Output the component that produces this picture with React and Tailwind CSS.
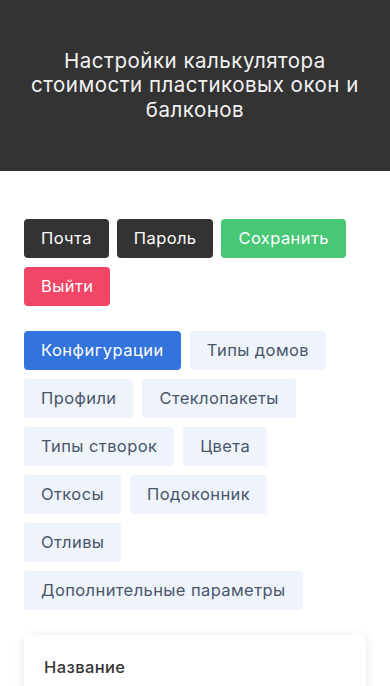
import React, { useState } from 'react';

const tabs = [
    'Конфигурации',
    'Типы домов',
    'Профили',
    'Стеклопакеты',
    'Типы створок',
    'Цвета',
    'Откосы',
    'Подоконник',
    'Отливы',
    'Дополнительные параметры'
];

const App = () => {
    const [active, setActive] = useState('Конфигурации');
    const [name, setName] = useState('');

    return (
        <div className="min-h-screen bg-white font-['Inter',sans-serif] text-[#333]">
            <header className="bg-[#333333] h-[171px] flex items-center justify-center px-7">
                <h1 className="text-[20.5px] leading-[24.5px] text-center text-[#f2f2f2] font-normal tracking-[0.5px]">
                    Настройки калькулятора стоимости пластиковых окон и балконов
                </h1>
            </header>

            <main className="px-6 pt-12">
                <div className="flex flex-wrap gap-x-2 gap-y-[9px]">
                    <button className="h-[39px] px-[17px] rounded bg-[#333333] text-white text-[16.5px] tracking-[0.4px]">Почта</button>
                    <button className="h-[39px] px-[17px] rounded bg-[#333333] text-white text-[16.5px] tracking-[0.4px]">Пароль</button>
                    <button className="h-[39px] px-[17px] rounded bg-[#48c774] text-white text-[16.5px] tracking-[0.4px]">Сохранить</button>
                    <button className="h-[39px] px-[17px] rounded bg-[#f14668] text-white text-[16.5px] tracking-[0.4px]">Выйти</button>
                </div>

                <div className="flex flex-wrap gap-x-[9px] gap-y-[9px] mt-[25px]">
                    {tabs.map((t) => (
                        <button
                            key={t}
                            onClick={() => setActive(t)}
                            className={
                                active === t
                                    ? 'h-[39px] px-[17px] rounded bg-[#3273dc] text-white text-[16.5px] tracking-[0.5px]'
                                    : 'h-[39px] px-[17px] rounded bg-[#eef3fc] text-[#4a5568] text-[16.5px] tracking-[0.4px]'
                            }
                        >
                            {t}
                        </button>
                    ))}
                </div>

                <div className="mt-[25px] mb-8 rounded-md bg-white shadow-[0_2px_12px_rgba(10,10,10,0.1)] px-5 pt-[20px] pb-6">
                    <label className="block text-[16.5px] font-medium tracking-[0.4px] text-[#363636]">Название</label>
                    <input
                        value={name}
                        onChange={(e) => setName(e.target.value)}
                        className="mt-[9px] mx-[3px] w-[calc(100%-6px)] h-10 border-t border-[#bbb] px-3 outline-none"
                    />
                </div>
            </main>
        </div>
    );
};

export default App;
